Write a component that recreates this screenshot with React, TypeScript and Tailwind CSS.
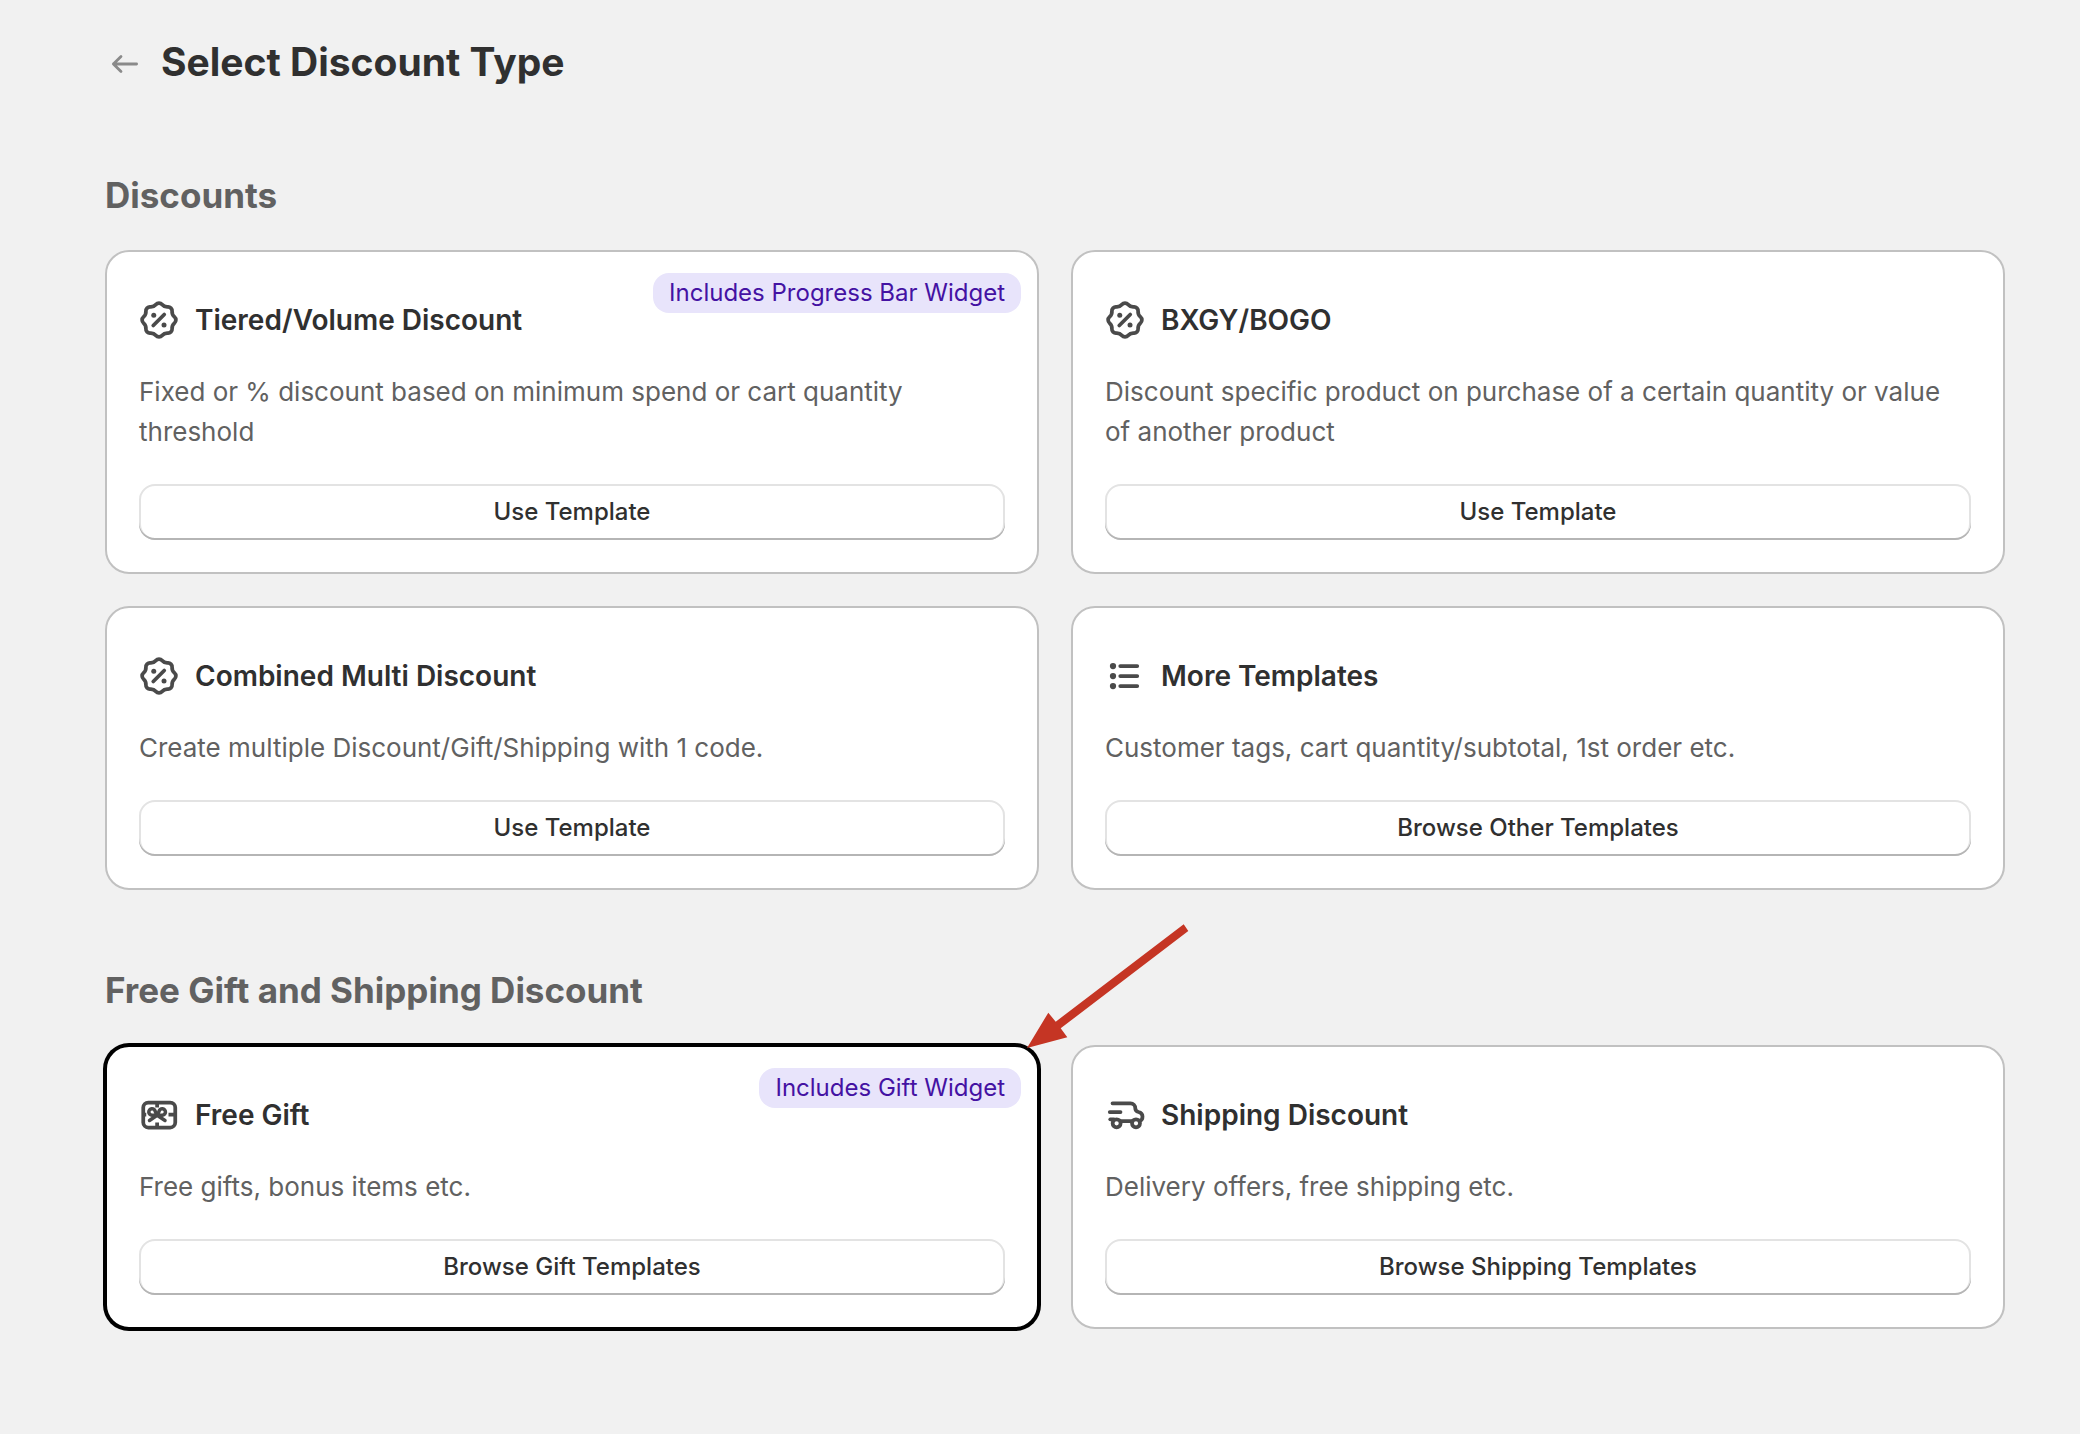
import type { ReactNode } from "react";

const Icon = ({ children }: { children: ReactNode }) => (
  <svg
    viewBox="2 2 16 16"
    className="h-10 w-10 shrink-0 text-[#4a4a4a]"
    fill="none"
    stroke="currentColor"
    strokeWidth="1.5"
    strokeLinecap="round"
    strokeLinejoin="round"
    aria-hidden="true"
  >
    {children}
  </svg>
);

const DiscountIcon = () => (
  <Icon>
    <path d="M8.77 3.82A1.62 1.62 0 0 1 11.23 3.82A2.7 2.7 0 0 0 13.5 4.76A1.62 1.62 0 0 1 15.24 6.5A2.7 2.7 0 0 0 16.18 8.77A1.62 1.62 0 0 1 16.18 11.23A2.7 2.7 0 0 0 15.24 13.5A1.62 1.62 0 0 1 13.5 15.24A2.7 2.7 0 0 0 11.23 16.18A1.62 1.62 0 0 1 8.77 16.18A2.7 2.7 0 0 0 6.5 15.24A1.62 1.62 0 0 1 4.76 13.5A2.7 2.7 0 0 0 3.82 11.23A1.62 1.62 0 0 1 3.82 8.77A2.7 2.7 0 0 0 4.76 6.5A1.62 1.62 0 0 1 6.5 4.76A2.7 2.7 0 0 0 8.77 3.82Z" />
    <path d="M7.7 12.2L12.1 7.8" />
    <circle cx="7.9" cy="8.1" r="1" fill="currentColor" stroke="none" />
    <circle cx="12" cy="12" r="1" fill="currentColor" stroke="none" />
  </Icon>
);

const ListIcon = () => (
  <Icon>
    <path d="M8.1 6H14.9M8.1 10H14.9M8.1 14H14.9" />
    <circle cx="5.2" cy="6" r="1.25" fill="currentColor" stroke="none" />
    <circle cx="5.2" cy="10" r="1.25" fill="currentColor" stroke="none" />
    <circle cx="5.2" cy="14" r="1.25" fill="currentColor" stroke="none" />
  </Icon>
);

const GiftIcon = () => (
  <Icon>
    <rect x="3.7" y="5" width="12.8" height="10" rx="2" />
    <g strokeWidth="1.4">
      <path d="M9.25 10.1H7.2A1.3 1.3 0 1 1 8.5 8.6Z" />
      <path d="M9.25 10.1H11.3A1.3 1.3 0 1 0 10 8.6Z" />
      <path d="M9.25 10.1L6.2 12.2M9.25 10.1L12.4 12.2" />
    </g>
    <g strokeLinecap="butt">
      <path d="M9.25 5V7M9.25 13V15M3.5 9.8H4.9M13.8 9.8H16.5" />
    </g>
  </Icon>
);

const TruckIcon = () => (
  <Icon>
    <path d="M5 5.3H12.2C13.3 5.3 14.1 6.2 14.1 7.2C14.1 8.2 14.6 8.6 15.4 8.8C16.4 9 17 9.7 17 10.6C17 11.4 16.8 12 16.1 12.3" />
    <path d="M3.9 8.8H8.2" />
    <path d="M4.1 11.7H5.6" />
    <path d="M8.3 12.4H12.7" />
    <circle cx="6.65" cy="13.3" r="1.6" />
    <circle cx="14.4" cy="13.3" r="1.6" />
  </Icon>
);

const Pointer = () => (
  <svg
    viewBox="0 0 162 125"
    className="pointer-events-none absolute -top-[123px] -right-[152px] h-[125px] w-[162px]"
    fill="#c53524"
    aria-hidden="true"
  >
    <path d="M0 124L21.3 88.7L28.7 97.7L156.7 0.3L161.3 7L33.7 104.3L40.3 113.3Z" />
  </svg>
);

type CardProps = {
  icon: ReactNode;
  title: string;
  text: string;
  action: string;
  badge?: string;
  selected?: boolean;
};

const Card = ({ icon, title, text, action, badge, selected }: CardProps) => (
  <article
    className={
      "relative flex flex-col rounded-3xl border-2 bg-white p-8 " +
      (selected ? "border-black ring-2 ring-black" : "border-[#c1c1c1]")
    }
  >
    {badge && (
      <span className="absolute top-[21px] right-4 rounded-2xl bg-[#e8e4fb] px-4 text-2xl leading-10 text-[#4412a3]">
        {badge}
      </span>
    )}
    <div className="flex items-center gap-4 pt-4 pb-8">
      {icon}
      <h3 className="text-[28px] leading-10 font-semibold">{title}</h3>
    </div>
    <p className="mb-8 text-[26px] leading-10 text-[#616161]">{text}</p>
    <button
      type="button"
      className="mt-auto h-14 rounded-2xl bg-white text-2xl font-medium shadow-[inset_0_-2px_0_#b5b5b5,inset_0_0_0_2px_#e3e3e3]"
    >
      {action}
    </button>
    {selected && <Pointer />}
  </article>
);

const Section = ({ title, children }: { title: string; children: ReactNode }) => (
  <section>
    <h2 className="mb-8 text-[35px] leading-[46px] font-bold text-[#616161]">{title}</h2>
    <div className="grid grid-cols-2 gap-8">{children}</div>
  </section>
);

export default function App() {
  return (
    <main className="min-h-screen bg-[#f1f1f1] pt-[38px] pr-[75px] pb-[105px] pl-[105px] font-['Inter',sans-serif] text-[#303030]">
      <header className="mb-[86px] flex items-center gap-4">
        <button type="button" aria-label="Back" className="flex h-10 w-10 items-center justify-center text-[#8a8a8a]">
          <svg viewBox="0 0 28 24" className="h-6 w-7" fill="none" stroke="currentColor" strokeWidth="2.8" strokeLinecap="round" strokeLinejoin="round">
            <path d="M25.6 14H2.4M10 6.4L2.4 14L10 21.6" />
          </svg>
        </button>
        <h1 className="text-[39px] leading-[48px] font-bold">Select Discount Type</h1>
      </header>

      <div className="flex flex-col gap-[77px]">
        <Section title="Discounts">
          <Card
            icon={<DiscountIcon />}
            title="Tiered/Volume Discount"
            text="Fixed or % discount based on minimum spend or cart quantity threshold"
            action="Use Template"
            badge="Includes Progress Bar Widget"
          />
          <Card
            icon={<DiscountIcon />}
            title="BXGY/BOGO"
            text="Discount specific product on purchase of a certain quantity or value of another product"
            action="Use Template"
          />
          <Card
            icon={<DiscountIcon />}
            title="Combined Multi Discount"
            text="Create multiple Discount/Gift/Shipping with 1 code."
            action="Use Template"
          />
          <Card
            icon={<ListIcon />}
            title="More Templates"
            text="Customer tags, cart quantity/subtotal, 1st order etc."
            action="Browse Other Templates"
          />
        </Section>

        <Section title="Free Gift and Shipping Discount">
          <Card
            icon={<GiftIcon />}
            title="Free Gift"
            text="Free gifts, bonus items etc."
            action="Browse Gift Templates"
            badge="Includes Gift Widget"
            selected
          />
          <Card
            icon={<TruckIcon />}
            title="Shipping Discount"
            text="Delivery offers, free shipping etc."
            action="Browse Shipping Templates"
          />
        </Section>
      </div>
    </main>
  );
}
